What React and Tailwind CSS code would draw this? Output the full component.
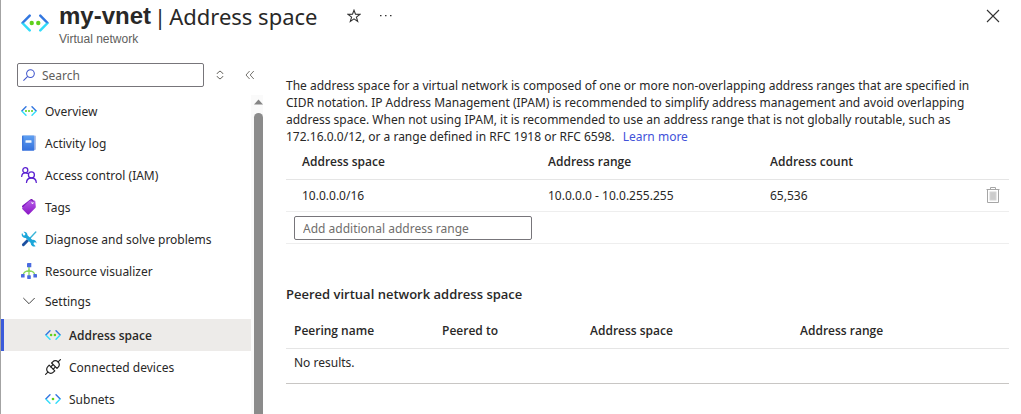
import { useId } from "react";

function NetworkIcon({ dots, className }) {
  const id = useId();
  const xs = { 1: [9], 2: [6.9, 11.1], 3: [5.6, 9, 12.4] }[dots];
  const r = { 1: 1.5, 2: 1.4, 3: 1.15 }[dots];
  return (
    <svg viewBox="0 0 18 18" className={className} aria-hidden="true">
      <defs>
        <linearGradient id={id} x1="0" y1="3.5" x2="0" y2="14.5" gradientUnits="userSpaceOnUse">
          <stop offset="0.45" stopColor="#3377e0" />
          <stop offset="0.55" stopColor="#32dcfa" />
        </linearGradient>
      </defs>
      <path
        d="M5.6 4.2 .9 9l4.7 4.8M12.4 4.2 17.1 9l-4.7 4.8"
        fill="none"
        stroke={`url(#${id})`}
        strokeWidth="1.6"
        strokeLinecap="round"
        strokeLinejoin="round"
      />
      {xs.map((x) => (
        <circle key={x} cx={x} cy="9" r={r} fill="#5fd01c" />
      ))}
    </svg>
  );
}

function LogIcon() {
  return (
    <svg viewBox="0 0 16 16" className="size-4" aria-hidden="true">
      <defs>
        <linearGradient id="log-cover" x1="0" y1="0" x2="0" y2="1">
          <stop offset="0" stopColor="#5ea0f2" />
          <stop offset="1" stopColor="#3570dc" />
        </linearGradient>
      </defs>
      <path d="M3 .4h11a1 1 0 0 1 1 1v12.500a1 1 0 0 1-1 1H3z" fill="#b3c0e6" />
      <path d="M2.200.5H12.500a.8.8 0 0 1 .8.8V15a.7.7 0 0 1-.7.7H2.200A1.200 1.200 0 0 1 1 14.500V1.700A1.200 1.200 0 0 1 2.200.5z" fill="url(#log-cover)" />
      <path d="M1 1.700v12.800a1.200 1.200 0 0 0 1.200 1.200h.2V.5h-.2A1.200 1.200 0 0 0 1 1.700z" fill="#3c76dc" />
      <rect x="4.500" y="5.300" width="6" height="2.500" rx=".4" fill="#f2f8ff" />
    </svg>
  );
}

function PeopleIcon() {
  return (
    <svg viewBox="0 0 16 16" className="size-4" fill="none" stroke="#5b21d1" strokeWidth="1.300" strokeLinecap="round" aria-hidden="true">
      <circle cx="4.300" cy="3.200" r="2.500" />
      <path d="M.7 9.400c.2-2.200 1.600-3.600 3.600-3.600.9 0 1.600.2 2.200.6" />
      <circle cx="10.400" cy="7.900" r="3" />
      <path d="M5.500 15.500c.2-2.700 2.100-4.500 4.900-4.500s4.700 1.800 4.900 4.500" />
    </svg>
  );
}

function TagIcon() {
  return (
    <svg viewBox="0 0 16 16" className="size-4" aria-hidden="true">
      <defs>
        <linearGradient id="tag-fill" x1="0" y1="0" x2="0" y2="1">
          <stop offset="0" stopColor="#b55be8" />
          <stop offset="1" stopColor="#8a16c4" />
        </linearGradient>
      </defs>
      <path d="M9.500.3c.6-.4 2.600.3 3 1L8 6.500 1.200 8.400c-.4-.7-.2-1.300.3-1.800z" fill="#7a10bb" />
      <path d="M14.300 2.200l.5 5.500c0 .5-.1.900-.5 1.300l-6.200 6.300c-.5.500-1.200.5-1.700 0l-4.900-5c-.5-.5-.5-1.200 0-1.700L8 2.100c.4-.4.800-.6 1.300-.6l4-.1c.6 0 1 .3 1 .8z" fill="url(#tag-fill)" />
      <circle cx="11.500" cy="3.800" r="1.100" fill="#fff" />
      <path d="M11.600 3.500C12.500 2.200 11.900.6 10 .4" fill="none" stroke="#6c0ca5" strokeWidth=".8" />
    </svg>
  );
}

function ToolsIcon() {
  return (
    <svg viewBox="0 0 16 16" className="size-4" aria-hidden="true">
      <path d="M14.800 1.100 9.200 7" stroke="#3ab5d8" strokeWidth="1.400" strokeLinecap="round" />
      <path d="M8.900 6.300 6.200 9.100l.8.900 2.900-2.700z" fill="#2a8fc8" />
      <path d="M5.800 8.300 1.300 12.700a1.500 1.500 0 0 0 0 2 1.500 1.500 0 0 0 2.100 0L7.800 10.200z" fill="#1b4fa0" />
      <path d="M1.100 1.900a3.500 3.500 0 0 0 .2 3.600 3.500 3.500 0 0 0 3.400 1.400l5 5a3.500 3.500 0 0 0 4.900 3.400l-2.100-2.200.4-1.500 1.500-.4 1.100 1.200a3.500 3.500 0 0 0-4.300-3.600L6.500 4.300A3.500 3.500 0 0 0 2.500.7l1.900 2-.4 1.500-1.500.4z" fill="#1ba6d9" />
    </svg>
  );
}

function TreeIcon() {
  return (
    <svg viewBox="0 0 16 16" className="size-4" aria-hidden="true">
      <path d="M8 4v9M2.300 12c.2-2.600 2.500-4.200 5.700-4.200s5.500 1.600 5.700 4.200" fill="none" stroke="#86d65a" strokeWidth="1.300" />
      <path d="M8 6 5.500 9h5z" fill="#86d65a" />
      <rect x="6" y="0" width="4.300" height="4.300" rx=".4" fill="#4a6be0" />
      <rect x="0" y="11" width="3.600" height="3.600" rx=".4" fill="#4a6be0" />
      <rect x="6.200" y="12.300" width="3.600" height="3.600" rx=".4" fill="#4a6be0" />
      <rect x="12.400" y="11" width="3.600" height="3.600" rx=".4" fill="#4a6be0" />
    </svg>
  );
}

function PlugIcon() {
  return (
    <svg viewBox="0 0 16 16" className="size-4" fill="none" stroke="#222" strokeWidth="1.200" strokeLinecap="round" strokeLinejoin="round" aria-hidden="true">
      <path d="M.6 15.400 2.900 13.100M13.100 2.900 15.400.6" />
      <path d="M4.200 6.200 9.800 11.800 8.400 13.200a3.600 3.600 0 0 1-5.200 0l-.4-.4a3.600 3.600 0 0 1 0-5.200z" />
      <path d="M6.600 4 12 9.400l1.200-1.200a3.600 3.600 0 0 0 0-5.200l-.2-.2a3.600 3.600 0 0 0-5.200 0z" />
      <path d="M5.800 7.800 7.600 6M8.200 10.200 10 8.400" />
    </svg>
  );
}

function MenuItem({ icon, label, nested, active }) {
  return (
    <li>
      <a
        href="#"
        aria-current={active ? "page" : undefined}
        className={`flex h-8 items-center gap-2 border-l-3 ${nested ? "pl-[41px]" : "pl-[17px]"} ${
          active ? "border-[#3b5bdb] bg-[#edebe9] font-['Open_Sans',sans-serif] font-semibold" : "border-transparent"
        }`}
      >
        {icon}
        {label}
      </a>
    </li>
  );
}

function Sidebar() {
  return (
    <nav aria-label="Resource menu" className="flex w-[262px] shrink-0 flex-col">
      <div className="flex items-center pl-4">
        <label className="flex h-6 w-[187px] items-center gap-[7px] rounded-xs border border-[#77757a] pl-[5px]">
          <svg viewBox="0 0 14 14" className="size-3 shrink-0" fill="none" stroke="#3f55cc" strokeWidth="1.200" aria-hidden="true">
            <circle cx="8.700" cy="5.300" r="4.500" />
            <path d="M5.500 8.500.5 13.500" />
          </svg>
          <input type="search" aria-label="Search" placeholder="Search" className="w-full min-w-0 outline-none placeholder:text-[#605e5c]" />
        </label>
        <button type="button" aria-label="Expand or collapse groups" className="ml-2 flex size-4 items-center justify-center">
          <svg viewBox="0 0 8 10" className="h-2.5 w-2" fill="none" stroke="#66645f" aria-hidden="true">
            <path d="M1.200 4V3.300L4 1l2.800 2.300V4M1.200 6v.7L4 9l2.800-2.300V6" />
          </svg>
        </button>
        <button type="button" aria-label="Collapse menu" className="ml-3.5 flex size-4 items-center justify-center">
          <svg viewBox="0 0 10 10" className="size-2.5" fill="none" stroke="#66645f" strokeWidth=".9" aria-hidden="true">
            <path d="M4.600 1 1 5l3.600 4M8.800 1 5.200 5l3.600 4" />
          </svg>
        </button>
      </div>
      <div className="mt-2 flex min-h-0 flex-1">
        <ul className="min-w-0 flex-1 overflow-hidden">
          <MenuItem icon={<NetworkIcon dots={3} className="size-4" />} label="Overview" />
          <MenuItem icon={<LogIcon />} label="Activity log" />
          <MenuItem icon={<PeopleIcon />} label="Access control (IAM)" />
          <MenuItem icon={<TagIcon />} label="Tags" />
          <MenuItem icon={<ToolsIcon />} label="Diagnose and solve problems" />
          <MenuItem icon={<TreeIcon />} label="Resource visualizer" />
          <li>
            <button type="button" aria-expanded="true" className="mb-1 flex h-7 w-full items-center gap-2 pl-5">
              <svg viewBox="0 0 16 16" className="size-4" fill="none" stroke="#444" aria-hidden="true">
                <path d="M2.300 5 8 10.700 13.700 5" />
              </svg>
              Settings
            </button>
            <ul>
              <MenuItem nested active icon={<NetworkIcon dots={2} className="size-4" />} label="Address space" />
              <MenuItem nested icon={<PlugIcon />} label="Connected devices" />
              <MenuItem nested icon={<NetworkIcon dots={1} className="size-4" />} label="Subnets" />
            </ul>
          </li>
        </ul>
        <div className="flex w-3 flex-col items-end bg-[#fafafa] pt-1" aria-hidden="true">
          <svg viewBox="0 0 9 6" className="mb-2 h-1.5 w-[9px]">
            <path d="M4.500 .5 9 5.500H0z" fill="#858585" />
          </svg>
          <div className="w-[9px] flex-1 rounded-t-full bg-[#8b8b8b]" />
        </div>
      </div>
    </nav>
  );
}

function AddressTable() {
  return (
    <table className="w-full table-fixed border-collapse text-left">
      <colgroup>
        <col className="w-[246px]" />
        <col className="w-[222px]" />
        <col />
        <col className="w-12" />
      </colgroup>
      <thead className="font-['Open_Sans',sans-serif]">
        <tr className="h-[34px] border-b border-[#e5e5e5]">
          <th className="pl-4 font-semibold">Address space</th>
          <th className="pl-4 font-semibold">Address range</th>
          <th className="pl-4 font-semibold">Address count</th>
          <th aria-label="Actions" />
        </tr>
      </thead>
      <tbody>
        <tr className="h-8 border-b border-[#eeeeee]">
          <td className="pl-4">10.0.0.0/16</td>
          <td className="pl-4">10.0.0.0 - 10.0.255.255</td>
          <td className="pl-4">65,536</td>
          <td className="pl-6">
            <button type="button" aria-label="Delete" className="flex size-4 items-center justify-center">
              <svg viewBox="0 0 14 16" className="h-4 w-3.5" fill="none" stroke="#a6a6a6" aria-hidden="true">
                <path d="M.5 2.500h13M4.500 2.500v-2h5v2M1.500 3v12.500h11V3" />
                <rect x="4" y="5" width="6" height="8" fill="#cccccc" stroke="#d4d4d4" />
              </svg>
            </button>
          </td>
        </tr>
        <tr className="h-8 border-b border-[#eeeeee]">
          <td className="pt-0.5 pl-2">
            <input
              type="text"
              aria-label="Add additional address range"
              placeholder="Add additional address range"
              className="block h-6 w-full rounded-xs border border-[#77757a] px-2 placeholder:text-[#706e6c]"
            />
          </td>
          <td colSpan={3} />
        </tr>
      </tbody>
    </table>
  );
}

function PeeringTable() {
  return (
    <table className="mt-[11px] w-full table-fixed border-collapse text-left">
      <colgroup>
        <col className="w-[148px]" />
        <col className="w-[148px]" />
        <col className="w-[210px]" />
        <col />
      </colgroup>
      <thead className="font-['Open_Sans',sans-serif]">
        <tr className="h-[35px] border-b border-[#e5e5e5]">
          <th className="pl-2 font-semibold">Peering name</th>
          <th className="pl-2 font-semibold">Peered to</th>
          <th className="pl-2 font-semibold">Address space</th>
          <th className="pl-2 font-semibold">Address range</th>
        </tr>
      </thead>
      <tbody>
        <tr className="h-[35px] border-b border-[#c8c6c4]">
          <td colSpan={4} className="pb-2 pl-2">No results.</td>
        </tr>
      </tbody>
    </table>
  );
}

export default function App() {
  return (
    <div className="flex h-screen flex-col overflow-hidden border-l border-[#a3a3a3] bg-white font-['Noto_Sans',sans-serif] text-[12px] leading-[17px] text-[#292827]">
      <header className="flex h-[63px] shrink-0 items-start pr-5 pl-5">
        <NetworkIcon dots={2} className="mt-[9px] size-7" />
        <div className="ml-2.5">
          <h1 className="flex h-8 items-center gap-[3px] text-[22px] leading-8">
            <span className="font-['Liberation_Sans',sans-serif] text-[24px] font-bold">my-vnet</span>
            <span>|</span>
            <span>Address space</span>
          </h1>
          <p className="font-['Liberation_Sans',sans-serif] leading-3.5 text-[#605e5c]">Virtual network</p>
        </div>
        <button type="button" aria-label="Add to favorites" className="mt-2 ml-7 flex size-4 items-center justify-center">
          <svg viewBox="0 0 14 14" className="size-3.5" fill="none" stroke="#333" strokeWidth="1.100" aria-hidden="true">
            <path d="M7 1.200 8.500 5.300l4.400.1-3.500 2.700 1.300 4.300L7 9.900l-3.700 2.500 1.300-4.300L1.100 5.400l4.400-.1z" />
          </svg>
        </button>
        <button type="button" aria-label="More actions" className="mt-2 ml-4 flex size-4 items-center justify-center">
          <svg viewBox="0 0 12 2" className="h-0.5 w-3" fill="#333" aria-hidden="true">
            <path d="M0 0h1.500v1.300H0zM5 0h1.500v1.300H5zM10 0h1.500v1.300H10z" />
          </svg>
        </button>
        <button type="button" aria-label="Close" className="mt-2 ml-auto flex size-4 items-center justify-center">
          <svg viewBox="0 0 14 14" className="size-3.5" fill="none" stroke="#333" strokeWidth="1.100" aria-hidden="true">
            <path d="m1 1 12 12M13 1 1 13" />
          </svg>
        </button>
      </header>
      <div className="flex min-h-0 flex-1">
        <Sidebar />
        <main className="min-w-0 flex-1 pt-3.5 pr-3 pl-[23px]">
          <p className="pr-5">
            The address space for a virtual network is composed of one or more non-overlapping address ranges that are specified in
            CIDR notation. IP Address Management (IPAM) is recommended to simplify address management and avoid overlapping
            address space. When not using IPAM, it is recommended to use an address range that is not globally routable, such as
            172.16.0.0/12, or a range defined in RFC 1918 or RFC 6598.
            <a href="#" className="ml-2 text-[#4152d9]">Learn more</a>
          </p>
          <AddressTable />
          <h2 className="mt-[42px] font-['Open_Sans',sans-serif] text-[13px] font-semibold">Peered virtual network address space</h2>
          <PeeringTable />
        </main>
      </div>
    </div>
  );
}
